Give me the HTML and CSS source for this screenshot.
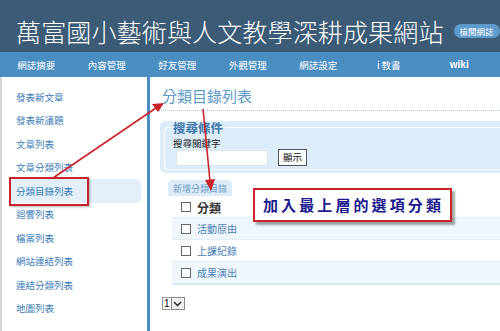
FILE: index.html
```html
<!DOCTYPE html>
<html lang="zh-Hant">
<head>
  <meta charset="UTF-8">
  <title>萬富國小藝術與人文教學深耕成果網站</title>
  <link rel="stylesheet" href="styles.css">
</head>
<body>

  <div class="header">
    <h1 class="site-title">萬富國小藝術與人文教學深耕成果網站</h1>
    <span class="badge">檢閱網誌</span>
  </div>

  <div class="nav">
    <a>網誌摘要</a>
    <a>內容管理</a>
    <a>好友管理</a>
    <a>外觀管理</a>
    <a>網誌設定</a>
    <a>i 教書</a>
    <a class="wiki">wiki</a>
  </div>

  <div class="layout">
    <ul class="sidebar">
      <li>發表新文章</li>
      <li>發表新議題</li>
      <li>文章列表</li>
      <li>文章分類列表</li>
      <li class="active">分類目錄列表</li>
      <li>迴響列表</li>
      <li>檔案列表</li>
      <li>網站連結列表</li>
      <li>連結分類列表</li>
      <li>地圖列表</li>
    </ul>

    <div class="main">
      <h2 class="page-title">分類目錄列表</h2>

      <div class="search-box">
        <fieldset>
          <legend>搜尋條件</legend>
          <div class="search-label">搜尋關鍵字</div>
          <div class="search-row">
            <span class="text-input"></span>
            <span class="btn">顯示</span>
          </div>
        </fieldset>
      </div>

      <div class="tab">新增分類目錄</div>
      <table class="cat-table">
        <tr class="head">
          <td class="chk"><span class="box"></span></td>
          <td>分類</td>
        </tr>
        <tr class="odd">
          <td class="chk"><span class="box"></span></td>
          <td>活動原由</td>
        </tr>
        <tr>
          <td class="chk"><span class="box"></span></td>
          <td>上課紀錄</td>
        </tr>
        <tr class="odd">
          <td class="chk"><span class="box"></span></td>
          <td>成果演出</td>
        </tr>
      </table>

      <div class="pager">
        <span class="sel-val">1</span>
        <span class="sel-btn">
          <svg width="9" height="6" viewBox="0 0 9 6"><path d="M1 1 L4.5 4.5 L8 1" fill="none" stroke="#222" stroke-width="1.4"/></svg>
        </span>
      </div>
    </div>
  </div>

  <!-- 註解標示 -->
  <div class="mark-box"></div>
  <div class="callout">加入最上層的選項分類</div>
  <svg class="arrows" width="500" height="331" viewBox="0 0 500 331">
    <line x1="53" y1="178" x2="156" y2="108" stroke="#c8242a" stroke-width="1.6"/>
    <polygon points="164,103 152,104 158,112" fill="#c8242a"/>
    <line x1="203" y1="109" x2="210" y2="181" stroke="#c8242a" stroke-width="1.6"/>
    <polygon points="211,191 205,180 215,179" fill="#c8242a"/>
  </svg>

</body>
</html>
```

FILE: styles.css
```css
body {
  margin: 0;
  width: 500px;
  height: 331px;
  overflow: hidden;
  position: relative;
  font-family: "Noto Sans CJK TC", "Liberation Sans", sans-serif;
  background: #fff;
}

.header {
  height: 52px;
  background: #3b5b77;
  display: flex;
  align-items: center;
  padding: 10px 0 0 16px;
  box-sizing: border-box;
}

.site-title {
  margin: 0;
  font-size: 25px;
  font-weight: 300;
  color: #fff;
  letter-spacing: 0.15px;
  white-space: nowrap;
}

.badge {
  margin-left: 10px;
  background: #5e9bcb;
  color: #fff;
  font-size: 8.5px;
  padding: 1px 6px;
  border-radius: 8px;
  line-height: 12px;
}

.nav {
  height: 25px;
  background: #4a8dc1;
  display: flex;
  align-items: center;
  padding-left: 1px;
}

.nav a {
  width: 70.5px;
  text-align: center;
  color: #fff;
  font-size: 9.5px;
}

.nav a.wiki {
  font-family: "Liberation Sans", sans-serif;
  font-weight: bold;
  font-size: 10px;
}

.layout {
  display: flex;
  height: 254px;
}

.sidebar {
  list-style: none;
  margin: 0;
  padding: 8px 0 0;
  width: 150px;
  box-sizing: border-box;
  border-left: 2px solid #d6d6d6;
  border-right: 3px solid #4a8dc1;
}

.sidebar li {
  height: 23.5px;
  display: flex;
  align-items: center;
  margin: 0 6px 0 8px;
  padding-left: 6px;
  font-size: 9.5px;
  color: #3a7cb8;
  border-radius: 5px;
}

.sidebar li.active {
  background: #e3f0fa;
}

.main {
  flex: 1;
  padding: 9px 0 0 9px;
}

.page-title {
  margin: 0;
  font-size: 15px;
  font-weight: normal;
  color: #5a98c6;
  line-height: 20px;
  padding-left: 3px;
  padding-bottom: 4px;
  border-bottom: 1px dotted #b8c8d8;
}

.search-box {
  margin: 10px 0 0 1px;
  background: #dcedf9;
  border-radius: 6px 0 0 6px;
  padding: 0 0 3px 4px;
}

.search-box fieldset {
  margin: 0;
  border: 1px solid #fff;
  border-right: none;
  padding: 0 0 3px 8px;
  border-radius: 4px 0 0 4px;
}

.search-box legend {
  font-size: 12.5px;
  font-weight: bold;
  color: #3f78a8;
  padding: 0 2px;
  line-height: 13px;
  margin-left: -2px;
}

.search-label {
  font-size: 9.5px;
  color: #222;
  line-height: 10px;
  margin-top: 4px;
}

.search-row {
  display: flex;
  align-items: center;
  margin-top: 1px;
}

.text-input {
  display: block;
  width: 90px;
  height: 14px;
  background: #fff;
  border: 1px solid #d8e4ee;
  margin-left: 3px;
}

.btn {
  margin-left: 10px;
  font-size: 9.5px;
  color: #111;
  background: #fff;
  border: 1px solid #555;
  padding: 1px 4px;
  line-height: 13px;
}

.tab {
  display: inline-block;
  margin: 7px 0 0 9px;
  background: #dcecf8;
  color: #6a9cc4;
  font-size: 9px;
  padding: 2px 5px 1px;
  border-radius: 4px 4px 0 0;
  line-height: 13px;
}

.cat-table {
  width: calc(100% - 13px);
  margin-left: 13px;
  border-collapse: collapse;
  border-bottom: 2px solid #d8e8f4;
}

.cat-table td {
  height: 21px;
  padding: 0;
  font-size: 10px;
  color: #4a82b4;
  border-top: 1px solid #e2eef8;
}

.cat-table tr.head td {
  height: 20px;
  border-top: none;
  font-size: 12px;
  font-weight: bold;
  color: #333;
}

.cat-table tr.odd td {
  background: #eff6fc;
}

.cat-table td.chk {
  width: 16px;
  padding-left: 9px;
}

.box {
  display: block;
  width: 8px;
  height: 8px;
  border: 1px solid #666;
  background: #fff;
}

.pager {
  display: flex;
  margin: 12px 0 0 3px;
  height: 13px;
}

.sel-val {
  font-family: "Liberation Sans", sans-serif;
  font-size: 10px;
  line-height: 11px;
  border: 1px solid #999;
  border-right: none;
  padding: 0 1px;
  background: #fff;
}

.sel-btn {
  width: 12px;
  border: 1px solid #888;
  background: #eee;
  display: flex;
  align-items: center;
  justify-content: center;
}

.mark-box {
  position: absolute;
  left: 9px;
  top: 177px;
  width: 76px;
  height: 25px;
  border: 2px solid #c8242a;
  box-shadow: 1px 1px 2px rgba(0, 0, 0, 0.3);
}

.callout {
  position: absolute;
  left: 253px;
  top: 188px;
  height: 30px;
  border: 2px solid #c8242a;
  background: #fff;
  box-shadow: 3px 3px 2px rgba(0, 0, 0, 0.35);
  color: #1a1a8c;
  font-weight: bold;
  font-size: 15px;
  letter-spacing: 3.1px;
  line-height: 30px;
  padding-left: 8px;
  width: 187px;
}

.arrows {
  position: absolute;
  left: 0;
  top: 0;
  pointer-events: none;
}
```
